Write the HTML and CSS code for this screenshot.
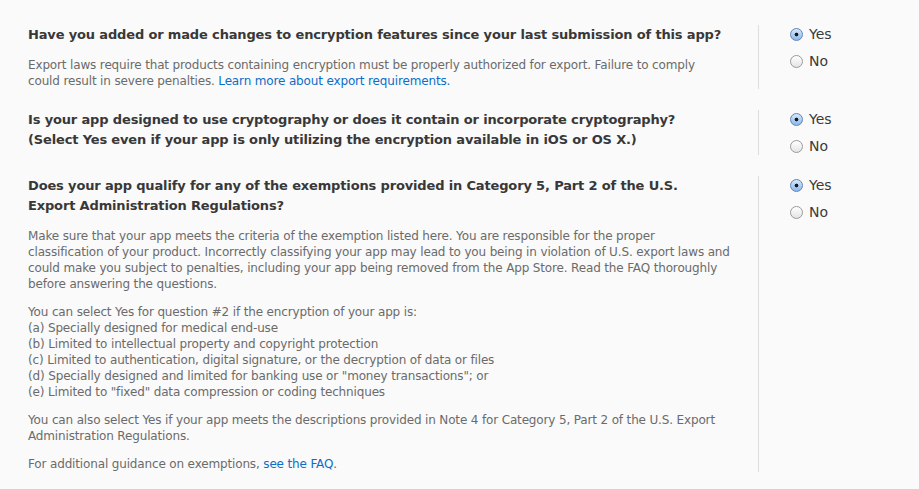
FILE: index.html
```html
<!DOCTYPE html>
<html>
<head>
<meta charset="utf-8">
<link rel="stylesheet" href="styles.css">
</head>
<body>
<div class="page">
  <section class="question">
    <div class="q-text">
      <h2 class="q-title">Have you added or made changes to encryption features since your last submission of this app?</h2>
      <p class="q-body">Export laws require that products containing encryption must be properly authorized for export. Failure to comply<br>could result in severe penalties. <a href="#">Learn more about export requirements.</a></p>
    </div>
    <div class="q-options">
      <label class="option"><input class="radio" type="radio" name="q1" checked> Yes</label>
      <label class="option"><input class="radio" type="radio" name="q1"> No</label>
    </div>
  </section>

  <section class="question">
    <div class="q-text">
      <h2 class="q-title">Is your app designed to use cryptography or does it contain or incorporate cryptography?<br>(Select Yes even if your app is only utilizing the encryption available in iOS or OS X.)</h2>
    </div>
    <div class="q-options">
      <label class="option"><input class="radio" type="radio" name="q2" checked> Yes</label>
      <label class="option"><input class="radio" type="radio" name="q2"> No</label>
    </div>
  </section>

  <section class="question">
    <div class="q-text">
      <h2 class="q-title">Does your app qualify for any of the exemptions provided in Category 5, Part 2 of the U.S.<br>Export Administration Regulations?</h2>
      <p class="q-body">Make sure that your app meets the criteria of the exemption listed here. You are responsible for the proper<br>classification of your product. Incorrectly classifying your app may lead to you being in violation of U.S. export laws and<br>could make you subject to penalties, including your app being removed from the App Store. Read the FAQ thoroughly<br>before answering the questions.</p>
      <p class="q-body">You can select Yes for question #2 if the encryption of your app is:<br>(a) Specially designed for medical end-use<br>(b) Limited to intellectual property and copyright protection<br>(c) Limited to authentication, digital signature, or the decryption of data or files<br>(d) Specially designed and limited for banking use or "money transactions"; or<br>(e) Limited to "fixed" data compression or coding techniques</p>
      <p class="q-body">You can also select Yes if your app meets the descriptions provided in Note 4 for Category 5, Part 2 of the U.S. Export<br>Administration Regulations.</p>
      <p class="q-body">For additional guidance on exemptions, <a href="#">see the FAQ</a>.</p>
    </div>
    <div class="q-options">
      <label class="option"><input class="radio" type="radio" name="q3" checked> Yes</label>
      <label class="option"><input class="radio" type="radio" name="q3"> No</label>
    </div>
  </section>
</div>
</body>
</html>
```

FILE: styles.css
```css
html, body {
  margin: 0;
  padding: 0;
  background: #fafafa;
}
body {
  font-family: "DejaVu Sans", "Liberation Sans", sans-serif;
  color: #333;
}
.page {
  padding: 25px 0 0 28px;
}
.question {
  display: flex;
  align-items: stretch;
  margin-bottom: 21px;
}
.q-text {
  width: 730px;
  flex: none;
}
.q-title {
  margin: 0;
  font-size: 13px;
  line-height: 20px;
  letter-spacing: -0.15px;
  font-weight: bold;
  color: #383838;
  white-space: nowrap;
}
.q-body {
  margin: 12px 0 0;
  font-size: 12px;
  line-height: 16px;
  letter-spacing: -0.15px;
  color: #6b6b6b;
  white-space: nowrap;
}
.q-body a {
  color: #0b6ec8;
  text-decoration: none;
}
.q-options {
  border-left: 1px solid #dedede;
  padding-left: 31px;
  display: flex;
  flex-direction: column;
  gap: 9px;
}
.option {
  display: flex;
  align-items: center;
  height: 18px;
  font-size: 14px;
  color: #3a3a3a;
}
.radio {
  appearance: none;
  -webkit-appearance: none;
  width: 13px;
  height: 13px;
  margin: 0 6px 0 0;
  border-radius: 50%;
  border: 1px solid #9a9a9a;
  background: linear-gradient(#ffffff, #e4e4e4);
  box-sizing: border-box;
}
.radio:checked {
  border-color: #5f84b8;
  background:
    radial-gradient(circle, #1a1a1a 0 1.6px, transparent 2.2px),
    linear-gradient(#d7e8fb, #8cb8ea);
}
```
